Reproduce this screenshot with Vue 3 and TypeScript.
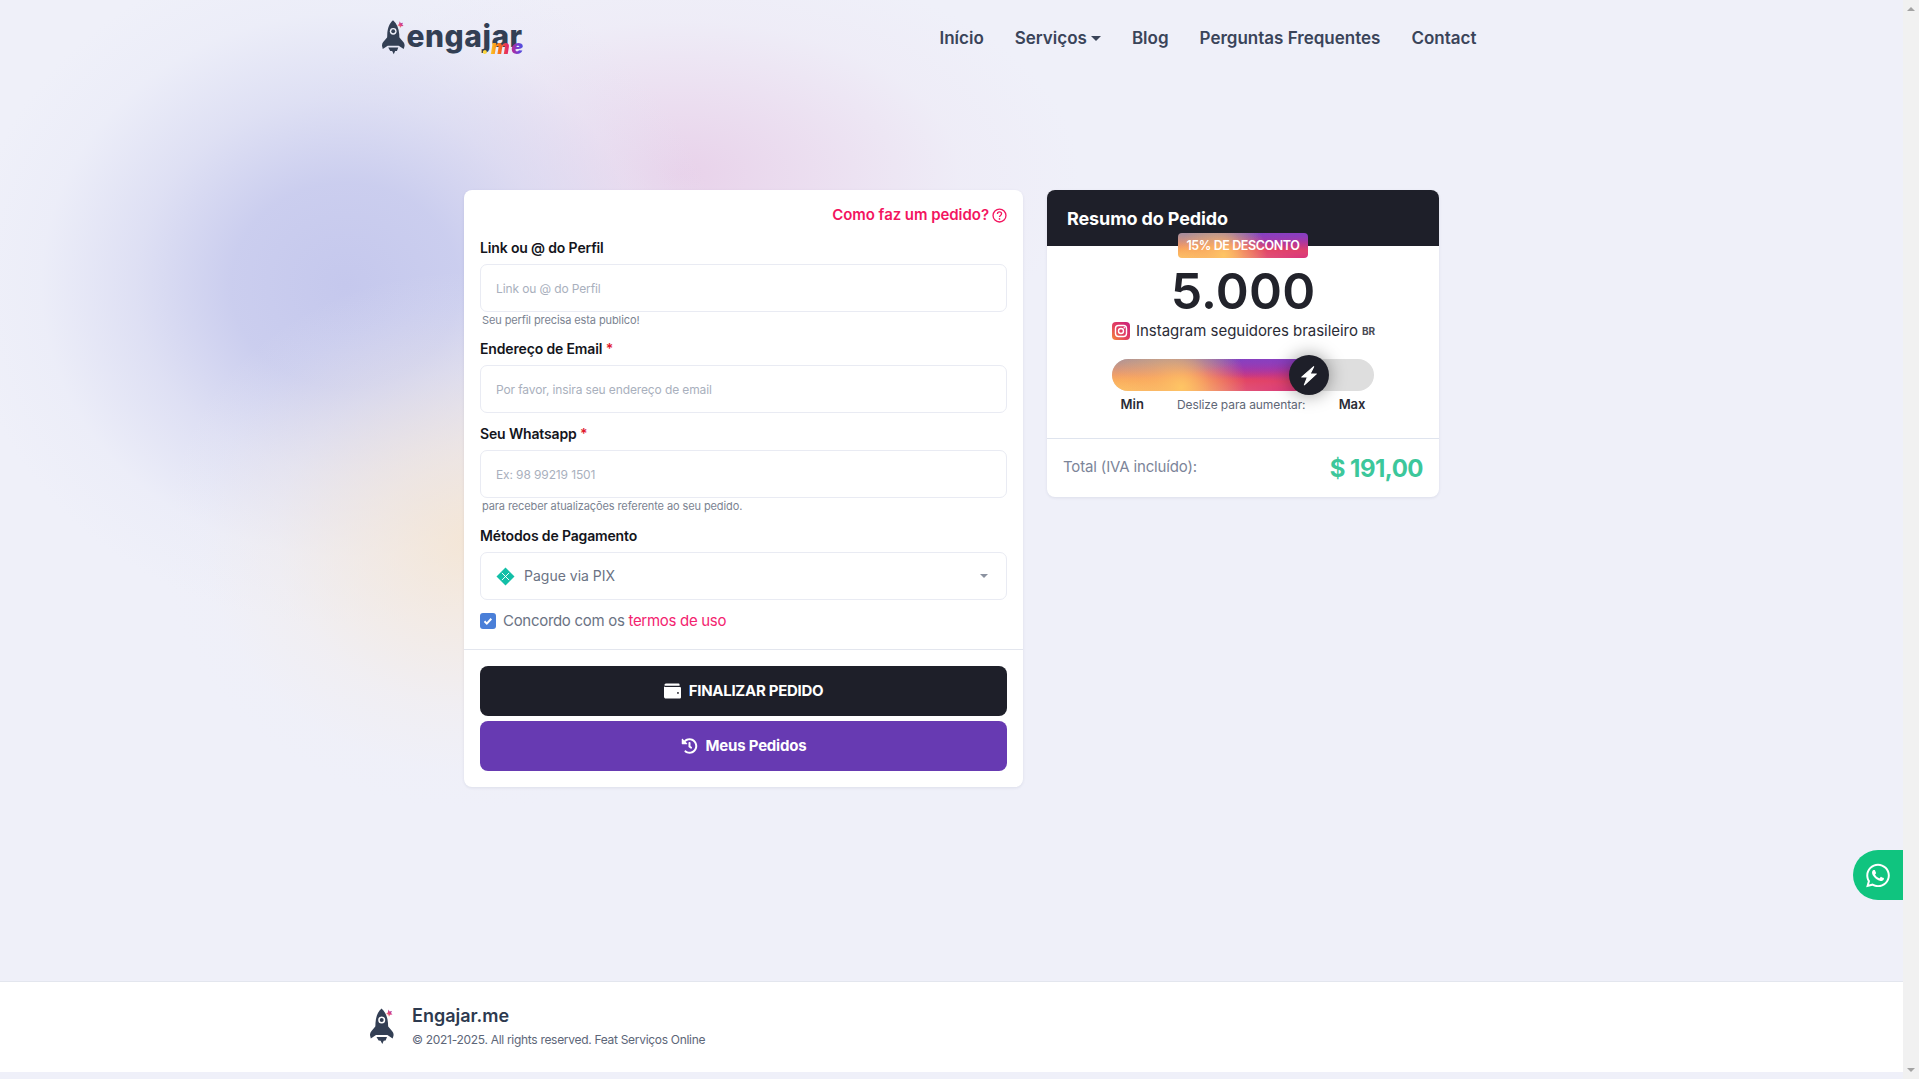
<script setup lang="ts">
const navItems: { label: string; caret?: boolean }[] = [
  { label: 'Início' },
  { label: 'Serviços', caret: true },
  { label: 'Blog' },
  { label: 'Perguntas Frequentes' },
  { label: 'Contact' },
]
const sliderPercent = 75
</script>

<template>
  <div class="shell">
    <div class="page">
      <header class="topbar">
        <div class="topbar-inner">
          <a class="logo">
            <svg class="logo-rocket" viewBox="0 0 24 36" aria-hidden="true">
              <defs>
                <linearGradient id="spark" x1="0" y1="1" x2="1" y2="0">
                  <stop offset="0" stop-color="#fec564" />
                  <stop offset="0.5" stop-color="#e33f7f" />
                  <stop offset="1" stop-color="#7a3dc2" />
                </linearGradient>
              </defs>
              <path class="rocket-body" d="M11.5 0C15.500 3.500 17.500 8.500 18 14.500c.1 1.600 0 2.800.2 3.600l3.800 4.300c1.500 1.700 2 3.600 1.200 5.800l-.6 1.800-5.200-3.400H6L.8 30l-.4-1.700c-.8-2.200-.4-4.100 1.100-5.800l3.800-4.400c.2-.8.1-2 .2-3.600C5.900 8.500 7.500 3.500 11.500 0z" />
              <path class="rocket-body" d="M6.500 28.500h10.500l-1.400 3.500-1.900.2-1.400 3.300-1.700-3.300-2-.2z" />
              <circle cx="11.700" cy="11.500" r="3.500" fill="#eff0f9" />
              <circle cx="11.700" cy="11.500" r="2" fill="#333f54" />
              <path d="M18.500 1l1 2 2.500-.5-1 2 1.500 1.500-2.500.2-1 2-.8-2.200-2.200-.5 1.800-1.500z" fill="url(#spark)" />
            </svg>
            <span class="logo-word">engajar<span class="logo-me">.me</span></span>
          </a>
          <nav class="nav">
            <a v-for="item in navItems" :key="item.label" class="nav-link">
              {{ item.label }}<span v-if="item.caret" class="caret"></span>
            </a>
          </nav>
        </div>
      </header>

      <main class="main">
        <section class="card form-card">
          <div class="form-body">
            <a class="howto">
              Como faz um pedido?
              <svg viewBox="0 0 16 16" class="howto-icon" aria-hidden="true">
                <circle cx="8" cy="8" r="6.900" fill="none" stroke="currentColor" stroke-width="1.400" />
                <path d="M5.800 6.300c0-1.300 1-2.100 2.200-2.100s2.200.8 2.200 2c0 1.700-2.200 1.700-2.200 3.400" fill="none" stroke="currentColor" stroke-width="1.400" />
                <circle cx="8" cy="11.600" r=".9" fill="currentColor" />
              </svg>
            </a>

            <label class="label label-first">Link ou @ do Perfil</label>
            <input class="field" placeholder="Link ou @ do Perfil" />
            <p class="hint">Seu perfil precisa esta publico!</p>

            <label class="label label-second">Endereço de Email <span class="req">*</span></label>
            <input class="field" placeholder="Por favor, insira seu endereço de email" />

            <label class="label label-third">Seu Whatsapp <span class="req">*</span></label>
            <input class="field" placeholder="Ex: 98 99219 1501" />
            <p class="hint">para receber atualizações referente ao seu pedido.</p>

            <label class="label label-fourth">Métodos de Pagamento</label>
            <div class="field select">
              <svg class="pix" viewBox="0 0 20 20" aria-hidden="true">
                <path d="M10 0.500L19.500 10 10 19.500 0.500 10z" fill="#12bfa7" />
                <path d="M6.200 6.200L13.800 13.800M13.800 6.200L6.200 13.800" stroke="#fff" stroke-width="1" fill="none" />
              </svg>
              <span class="select-text">Pague via PIX</span>
              <span class="select-caret"></span>
            </div>

            <div class="terms">
              <span class="check">
                <svg viewBox="0 0 16 16" aria-hidden="true">
                  <path d="M4.500 8.300l2.300 2.300 4.500-4.800" fill="none" stroke="#fff" stroke-width="2" />
                </svg>
              </span>
              <span class="terms-text">Concordo com os <a class="terms-link">termos de uso</a></span>
            </div>
          </div>

          <div class="form-actions">
            <button class="btn btn-dark">
              <svg class="btn-icon" viewBox="0 0 18 16" aria-hidden="true">
                <path d="M2 0h13.500c.6 0 1 .4 1 1v1.500H1.500C1 2.500 .6 2.300 .3 2 .5 .9 1.100 0 2 0z" fill="#fff" />
                <path fill-rule="evenodd" d="M0 3.300c.4.300.9.400 1.400.400H17c.6 0 1 .4 1 1v9.800c0 .8-.7 1.500-1.500 1.500h-14.500C.9 16 0 15.100 0 14zM14.800 9a1 1 0 1 0 0 2 1 1 0 0 0 0-2z" fill="#fff" />
              </svg>
              FINALIZAR PEDIDO
            </button>
            <button class="btn btn-purple">
              <svg class="btn-icon" viewBox="0 0 512 512" aria-hidden="true">
                <path fill="#fff" d="M504 255.531c.253 136.64-111.18 248.372-247.82 248.468-59.015.042-113.223-20.53-155.822-54.911-11.077-8.94-11.905-25.541-1.839-35.607l11.267-11.267c8.609-8.609 22.353-9.551 31.891-1.984C173.062 425.135 212.781 440 256 440c101.705 0 184-82.311 184-184 0-101.705-82.311-184-184-184-48.814 0-93.149 18.969-126.068 49.932l50.754 50.754c10.08 10.08 2.941 27.314-11.313 27.314H24c-8.837 0-16-7.163-16-16V38.627c0-14.254 17.234-21.393 27.314-11.314l49.372 49.372C129.209 34.136 189.552 8 256 8c136.81 0 247.747 110.78 248 247.531zm-180.912 78.784l9.823-12.63c8.138-10.463 6.253-25.542-4.21-33.679L288 256.349V152c0-13.255-10.745-24-24-24h-16c-13.255 0-24 10.745-24 24v135.651l65.409 50.874c10.463 8.137 25.541 6.253 33.679-4.21z" />
              </svg>
              Meus Pedidos
            </button>
          </div>
        </section>

        <aside class="card summary-card">
          <div class="summary-head">Resumo do Pedido</div>
          <div class="summary-body">
            <span class="badge ig-gradient">15% DE DESCONTO</span>
            <div class="amount">5.000</div>
            <div class="service">
              <svg class="ig-icon" viewBox="0 0 18 18" aria-hidden="true">
                <defs>
                  <linearGradient id="igfill" x1="0" y1="1" x2="1" y2="0">
                    <stop offset="0" stop-color="#f58b3a" />
                    <stop offset="0.45" stop-color="#e33f5f" />
                    <stop offset="1" stop-color="#c9207f" />
                  </linearGradient>
                </defs>
                <rect width="18" height="18" rx="4" fill="url(#igfill)" />
                <rect x="3.500" y="3.500" width="11" height="11" rx="3" fill="none" stroke="#fff" stroke-width="1.400" />
                <circle cx="9" cy="9" r="2.500" fill="none" stroke="#fff" stroke-width="1.400" />
                <circle cx="12.300" cy="5.700" r=".8" fill="#fff" />
              </svg>
              <span>Instagram seguidores brasileiro</span>
              <small class="service-tag">BR</small>
            </div>
            <div class="slider">
              <div class="slider-fill ig-gradient" :style="{ width: sliderPercent + '%' }"></div>
              <div class="slider-thumb" :style="{ left: sliderPercent + '%' }">
                <svg viewBox="0 0 24 24" aria-hidden="true">
                  <path d="M17 3.500L5.500 13.500h5.500L8 21 19.500 10.500h-6z" fill="#fff" stroke="#fff" stroke-width="1" stroke-linejoin="round" />
                </svg>
              </div>
            </div>
            <div class="slider-labels">
              <span class="slider-end">Min</span>
              <span class="slider-note">Deslize para aumentar:</span>
              <span class="slider-end">Max</span>
            </div>
          </div>
          <div class="summary-total">
            <span class="total-label">Total (IVA incluído):</span>
            <span class="total-value">$ 191,00</span>
          </div>
        </aside>
      </main>

      <footer class="footer">
        <svg class="footer-rocket" viewBox="0 0 24 36" aria-hidden="true">
          <path class="rocket-body" d="M11.5 0C15.500 3.500 17.500 8.500 18 14.500c.1 1.600 0 2.800.2 3.600l3.800 4.300c1.500 1.700 2 3.600 1.200 5.800l-.6 1.800-5.200-3.400H6L.8 30l-.4-1.700c-.8-2.200-.4-4.100 1.100-5.800l3.800-4.400c.2-.8.1-2 .2-3.600C5.900 8.500 7.500 3.500 11.500 0z" />
          <path class="rocket-body" d="M6.500 28.500h10.500l-1.400 3.500-1.900.2-1.400 3.300-1.700-3.300-2-.2z" />
          <circle cx="11.700" cy="11.500" r="3.500" fill="#fff" />
          <circle cx="11.700" cy="11.500" r="2" fill="#333f54" />
          <path d="M18.500 1l1 2 2.500-.5-1 2 1.500 1.500-2.500.2-1 2-.8-2.200-2.200-.5 1.800-1.500z" fill="url(#spark)" />
        </svg>
        <div class="footer-text">
          <div class="footer-title">Engajar.me</div>
          <div class="footer-copy">© 2021-2025. All rights reserved. Feat Serviços Online</div>
        </div>
      </footer>

      <a class="whatsapp">
        <svg viewBox="0 0 448 512" aria-hidden="true">
          <path fill="#fff" d="M380.9 97.1C339 55.1 283.2 32 223.9 32c-122.4 0-222 99.6-222 222 0 39.1 10.2 77.3 29.6 111L0 480l117.7-30.9c32.4 17.7 68.900 27 106.100 27h.1c122.300 0 224.100-99.600 224.100-222 0-59.300-25.200-115-67.100-157zm-157 341.600c-33.200 0-65.700-8.900-94-25.700l-6.700-4-69.800 18.300L72 359.200l-4.400-7c-18.500-29.400-28.200-63.300-28.200-98.200 0-101.700 82.800-184.500 184.600-184.500 49.300 0 95.600 19.200 130.400 54.100 34.800 34.900 56.200 81.200 56.100 130.500 0 101.800-84.900 184.600-186.600 184.600zm101.200-138.200c-5.500-2.800-32.800-16.200-37.900-18-5.100-1.900-8.800-2.800-12.500 2.800-3.700 5.600-14.300 18-17.600 21.800-3.200 3.700-6.500 4.200-12 1.400-32.600-16.300-54-29.100-75.500-66-5.700-9.800 5.700-9.100 16.300-30.300 1.800-3.700.9-6.900-.5-9.700-1.400-2.800-12.500-30.100-17.100-41.200-4.500-10.800-9.100-9.300-12.500-9.500-3.200-.2-6.900-.2-10.600-.2-3.700 0-9.700 1.400-14.800 6.900-5.100 5.600-19.400 19-19.400 46.300 0 27.300 19.900 53.700 22.600 57.400 2.800 3.700 39.100 59.700 94.800 83.800 35.200 15.200 49 16.500 66.600 13.900 10.700-1.600 32.800-13.400 37.400-26.400 4.600-13 4.600-24.100 3.200-26.400-1.300-2.500-5-3.900-10.500-6.600z" />
        </svg>
      </a>
    </div>

    <div class="scrollbar" aria-hidden="true">
      <span class="arrow-up"></span>
      <span class="arrow-down"></span>
    </div>
  </div>
</template>

<style>
html, body {
  margin: 0;
  overflow: hidden;
}
</style>

<style scoped>
* {
  box-sizing: border-box;
}
.shell {
  display: flex;
  width: 100%;
  height: 1079px;
  font-family: Inter, "Noto Sans", sans-serif;
  color: #1e1f29;
  background: #eff0f9;
}
.page {
  position: relative;
  flex: 1;
  min-width: 0;
  display: flex;
  flex-direction: column;
  padding-bottom: 7px;
  background:
    radial-gradient(ellipse 310px 270px at 470px 540px, rgba(246, 228, 205, 0.78) 0, rgba(245, 231, 216, 0.62) 30%, rgba(243, 235, 230, 0.34) 62%, rgba(240, 238, 243, 0.1) 86%, rgba(239, 240, 249, 0) 100%),
    radial-gradient(ellipse 380px 340px at 345px 285px, rgba(197, 200, 237, 1) 0, rgba(201, 204, 238, 0.95) 30%, rgba(213, 215, 241, 0.65) 55%, rgba(228, 230, 246, 0.28) 80%, rgba(239, 240, 249, 0) 100%),
    radial-gradient(ellipse 400px 220px at 680px 175px, rgba(232, 208, 233, 0.95) 0, rgba(234, 216, 237, 0.72) 35%, rgba(237, 229, 243, 0.32) 70%, rgba(239, 240, 249, 0) 100%),
    #eff0f9;
}
.scrollbar {
  width: 16px;
  flex: none;
  background: #f1f1f1;
  display: flex;
  flex-direction: column;
  justify-content: space-between;
  align-items: center;
  padding: 7px 0;
}
.arrow-up,
.arrow-down {
  width: 0;
  height: 0;
  border-left: 4px solid transparent;
  border-right: 4px solid transparent;
}
.arrow-up {
  border-bottom: 4px solid #a3a3a3;
}
.arrow-down {
  border-top: 4px solid #a3a3a3;
}

/* header */
.topbar {
  height: 76px;
  flex: none;
}
.topbar-inner {
  width: 1140px;
  height: 100%;
  margin: 0 auto;
  padding-right: 45px;
  display: flex;
  align-items: center;
  justify-content: space-between;
}
.logo {
  display: flex;
  align-items: flex-start;
  height: 36px;
}
.logo-rocket {
  width: 23px;
  height: 35px;
  flex: none;
}
.rocket-body {
  fill: #333f54;
}
.logo-word {
  position: relative;
  margin-left: 2px;
  font-size: 30px;
  line-height: 32px;
  font-weight: 800;
  color: #333f54;
  letter-spacing: 0.5px;
}
.logo-me {
  position: absolute;
  right: -2px;
  top: 17px;
  font-size: 20px;
  line-height: 20px;
  font-style: italic;
  font-weight: 900;
  letter-spacing: 1.5px;
  background: linear-gradient(90deg, #fde047 0, #fbbf24 22%, #f97316 40%, #e11d72 62%, #6d3fd6 85%, #3b5fe0 100%);
  -webkit-background-clip: text;
  background-clip: text;
  color: transparent;
}
.nav {
  display: flex;
  gap: 31px;
}
.nav-link {
  font-size: 17px;
  font-weight: 600;
  color: #3a4459;
  display: flex;
  align-items: center;
  line-height: 24px;
}
.caret {
  margin-left: 4px;
  width: 0;
  height: 0;
  border-left: 5px solid transparent;
  border-right: 5px solid transparent;
  border-top: 5px solid #3a4459;
}

/* main */
.main {
  flex: 1;
  padding-top: 114px;
  display: flex;
  justify-content: center;
  align-items: flex-start;
  gap: 24px;
}
.card {
  background: #fff;
  border-radius: 8px;
  box-shadow: 0 1px 3px rgba(60, 70, 110, 0.1);
  overflow: hidden;
}
.form-card {
  width: 559px;
}
.form-body {
  padding: 16px 16px 0;
  display: flex;
  flex-direction: column;
  height: 460px;
  border-bottom: 1px solid #e3e6ee;
}
.howto {
  align-self: flex-end;
  display: flex;
  align-items: center;
  gap: 3px;
  font-size: 15px;
  line-height: 18px;
  font-weight: 600;
  color: #f3155f;
  letter-spacing: -0.05px;
}
.howto-icon {
  width: 15px;
  height: 15px;
}
.label {
  display: block;
  font-size: 14px;
  line-height: 18px;
  font-weight: 600;
  color: #14151c;
  margin-bottom: 7px;
  letter-spacing: -0.15px;
}
.label-first {
  margin-top: 15px;
}
.label-second {
  margin-top: 13px;
}
.label-third {
  margin-top: 12px;
}
.label-fourth {
  margin-top: 14px;
}
.req {
  color: #e0182d;
}
.field {
  display: block;
  width: 100%;
  height: 48px;
  flex: none;
  border: 1px solid #e9ebf3;
  border-radius: 7px;
  padding: 0 15px;
  background: #fff;
  font-family: inherit;
  font-size: 12px;
  letter-spacing: -0.12px;
  outline: none;
}
.field::placeholder {
  color: #a9b0bd;
  opacity: 1;
}
.hint {
  margin: 1px 0 0 2px;
  font-size: 11px;
  line-height: 14px;
  color: #7b8391;
  letter-spacing: -0.1px;
}
.select {
  display: flex;
  align-items: center;
}
.pix {
  width: 19px;
  height: 19px;
  flex: none;
}
.select-text {
  margin-left: 9px;
  margin-bottom: 2px;
  font-size: 14px;
  letter-spacing: 0;
  color: #6b7384;
  flex: 1;
}
.select-caret {
  width: 0;
  height: 0;
  margin-right: 3px;
  border-left: 4px solid transparent;
  border-right: 4px solid transparent;
  border-top: 4px solid #8b92a0;
}
.terms {
  margin-top: 13px;
  display: flex;
  align-items: center;
  gap: 7px;
  font-size: 15px;
  line-height: 16px;
  color: #6b7384;
  letter-spacing: -0.3px;
}
.check {
  width: 16px;
  height: 16px;
  border-radius: 3px;
  background: #4a7fd8;
  display: flex;
  flex: none;
}
.terms-link {
  color: #f3236f;
}
.form-actions {
  padding: 16px;
  display: flex;
  flex-direction: column;
  gap: 5px;
}
.btn {
  height: 50px;
  border: 0;
  border-radius: 8px;
  padding: 0 0 1px;
  display: flex;
  align-items: center;
  justify-content: center;
  gap: 8px;
  font-family: inherit;
  font-size: 15px;
  font-weight: 700;
  color: #fff;
  letter-spacing: -0.3px;
}
.btn-dark {
  background: #1e1f29;
}
.btn-purple {
  background: #673ab2;
  letter-spacing: -0.2px;
}
.btn-icon {
  width: 17px;
  height: 16px;
}

/* summary */
.summary-card {
  width: 392px;
  height: 307px;
  display: flex;
  flex-direction: column;
}
.summary-head {
  height: 56px;
  flex: none;
  background: #1e1f29;
  color: #fff;
  padding: 18px 20px 0;
  font-size: 18px;
  line-height: 22px;
  font-weight: 700;
  letter-spacing: -0.12px;
}
.summary-body {
  flex: 1;
  display: flex;
  flex-direction: column;
  align-items: center;
  border-bottom: 1px solid #dfe4ee;
}
.badge {
  margin-top: -13px;
  width: 130px;
  height: 25px;
  border-radius: 4px;
  color: #fff;
  font-size: 12.5px;
  font-weight: 600;
  line-height: 25px;
  letter-spacing: -0.4px;
  text-align: center;
  white-space: nowrap;
}
.ig-gradient {
  background:
    radial-gradient(circle farthest-corner at 35% 90%, #fec564, transparent 50%),
    radial-gradient(circle farthest-corner at 0 140%, #fec564, transparent 50%),
    radial-gradient(ellipse farthest-corner at 0 -25%, #5258cf, transparent 50%),
    radial-gradient(ellipse farthest-corner at 20% -50%, #5258cf, transparent 50%),
    radial-gradient(ellipse farthest-corner at 100% 0, #893dc2, transparent 50%),
    radial-gradient(ellipse farthest-corner at 60% -20%, #893dc2, transparent 50%),
    radial-gradient(ellipse farthest-corner at 100% 100%, #d9317a, transparent),
    linear-gradient(#6559ca, #bc318f 30%, #e33f5f 50%, #f77638 70%, #fec66d 100%);
}
.amount {
  margin-top: 4px;
  font-size: 50px;
  line-height: 58px;
  font-weight: 600;
  color: #22232b;
  letter-spacing: 0.2px;
}
.service {
  margin-top: -1px;
  width: 262px;
  display: flex;
  align-items: center;
  font-size: 15px;
  line-height: 24px;
  color: #2a2b35;
  white-space: nowrap;
  letter-spacing: -0.03px;
}
.ig-icon {
  width: 18px;
  height: 18px;
  flex: none;
  margin-right: 6px;
}
.service-tag {
  margin-left: 4px;
  font-size: 10px;
  font-weight: 700;
  color: #4a4b55;
}
.slider {
  position: relative;
  margin-top: 16px;
  width: 262px;
  height: 32px;
  border-radius: 16px;
  background: #dedede;
  flex: none;
}
.slider-fill {
  height: 100%;
  border-radius: 16px 0 0 16px;
}
.slider-thumb {
  position: absolute;
  top: -4px;
  width: 40px;
  height: 40px;
  margin-left: -40px;
  transform: translateX(20px);
  border-radius: 50%;
  background: #1e1f29;
  box-shadow: 0 0 18px rgba(0, 0, 0, 0.4);
  display: flex;
  align-items: center;
  justify-content: center;
}
.slider-thumb svg {
  width: 25px;
  height: 25px;
}
.slider-labels {
  margin-top: 5px;
  width: 245px;
  display: flex;
  align-items: center;
  justify-content: space-between;
}
.slider-end {
  font-size: 13px;
  font-weight: 600;
  color: #2a2b35;
}
.slider-note {
  font-size: 12px;
  color: #5f6776;
  letter-spacing: -0.1px;
}
.summary-total {
  height: 58px;
  flex: none;
  padding: 0 16px;
  display: flex;
  align-items: center;
  justify-content: space-between;
}
.total-label {
  margin-bottom: 4px;
  font-size: 15px;
  color: #7c8599;
  letter-spacing: -0.15px;
}
.total-value {
  font-size: 24px;
  font-weight: 700;
  color: #3cc79b;
  letter-spacing: -0.5px;
}

/* footer */
.footer {
  flex: none;
  height: 91px;
  background: #fff;
  border-top: 1px solid #e3e6ee;
  padding: 23px 0 0 370px;
  display: flex;
  align-items: flex-start;
}
.footer-rocket {
  width: 24px;
  height: 37px;
  flex: none;
  margin-top: 3px;
}
.footer-text {
  margin-left: 18px;
}
.footer-title {
  font-size: 18px;
  line-height: 22px;
  font-weight: 600;
  color: #2d3a4f;
}
.footer-copy {
  margin-top: 4px;
  font-size: 12px;
  line-height: 18px;
  color: #5d6678;
  letter-spacing: -0.3px;
}
.whatsapp {
  position: absolute;
  right: 0;
  top: 850px;
  width: 50px;
  height: 50px;
  border-radius: 25px 0 0 25px;
  background: #10c47f;
  display: flex;
  align-items: center;
  justify-content: center;
}
.whatsapp svg {
  width: 24px;
  height: 27px;
}
</style>
